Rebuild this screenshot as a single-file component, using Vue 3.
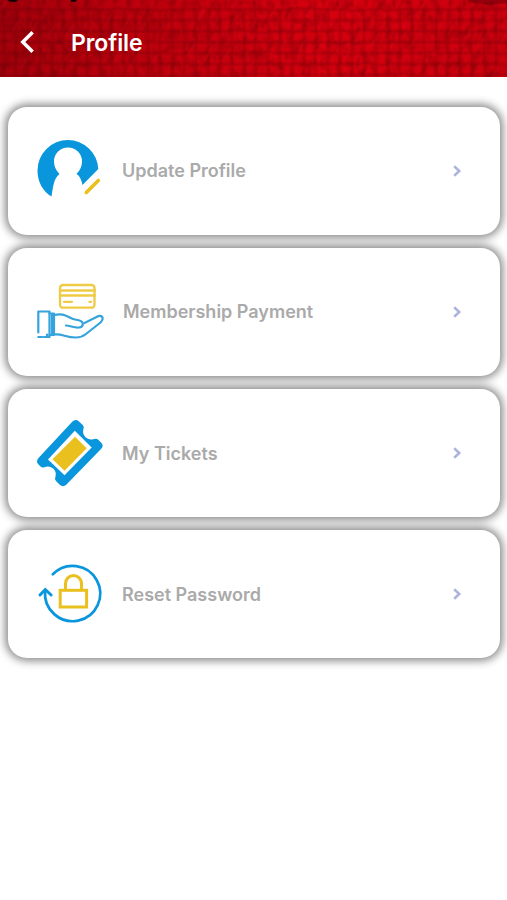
<template>
  <div class="profile-page">
    <header class="app-header">
      <svg class="fabric" viewBox="0 0 507 77" preserveAspectRatio="none" aria-hidden="true">
        <defs>
          <linearGradient id="red" x1="0" x2="1" y1="0" y2="0">
            <stop offset="0" stop-color="#a4000b" />
            <stop offset="0.25" stop-color="#bd000d" />
            <stop offset="0.65" stop-color="#d8000f" />
            <stop offset="1" stop-color="#cb000e" />
          </linearGradient>
          <filter id="wobble" x="0" y="0" width="1" height="1" color-interpolation-filters="sRGB">
            <feTurbulence type="fractalNoise" baseFrequency="0.05" numOctaves="2" seed="4" />
            <feDisplacementMap in="SourceGraphic" scale="3" xChannelSelector="R" yChannelSelector="G" />
            <feGaussianBlur stdDeviation="0.8" />
          </filter>
          <filter id="grain" x="0" y="0" width="1" height="1" color-interpolation-filters="sRGB">
            <feTurbulence type="fractalNoise" baseFrequency="0.14 0.1" numOctaves="3" seed="9" />
            <feColorMatrix values="0 0 0 0 0.35  0 0 0 0 0  0 0 0 0 0.02  1.8 0 0 0 -0.7" />
          </filter>
        </defs>
        <rect width="507" height="77" fill="url(#red)" />
        <rect width="507" height="77" filter="url(#grain)" opacity="0.4" />
        <g filter="url(#wobble)" fill="none">
          <rect width="507" height="77" fill="transparent" />
          <path :d="weave" stroke="#600007" stroke-width="1.4" opacity="0.5" />
          <path :d="creases" stroke="#7c0008" stroke-width="1.2" opacity="0.45" />
          <path :d="creases" stroke="#f01a28" stroke-width="1" opacity="0.35" transform="translate(2 1)" />
        </g>
        <path d="M7 0h11q-1 2-5 2t-6-2zM71 0h6l-2 2h-4z" fill="#170003" />
        <path d="M468 0h39v3l-18 2-21-3z" fill="#65000a" opacity="0.5" />
      </svg>
      <button class="back" aria-label="Back">
        <svg width="16" height="24" viewBox="0 0 16 24">
          <path d="M12.6 2.2 2.8 12l9.8 9.8" fill="none" stroke="#fff" stroke-width="3.5" />
        </svg>
      </button>
      <h1 class="title">Profile</h1>
    </header>

    <main class="menu">
      <button v-for="item in items" :key="item.icon" class="menu-card">
        <svg class="menu-icon" width="76" height="80" viewBox="0 0 76 80" aria-hidden="true">
          <g v-if="item.icon === 'user'">
            <path
              d="M19.5 65.5C11 60.5 5.5 51 5.5 39.5A30.5 30.5 0 0 1 36 9A30.5 30.5 0 0 1 66.3 38L50.5 54C49.5 49 48 45 44.5 43Q50 37.5 50 30.5A14 14 0 0 0 22 30.5Q22 37.5 27.5 43C21.5 47.5 21 57 19.5 65.5Z"
              fill="#0996dc"
            />
            <path d="m54.3 61.5 12-12" stroke="#eac01e" stroke-width="3.6" stroke-linecap="round" />
          </g>
          <g v-else-if="item.icon === 'payment'" fill="none" stroke-linecap="round" stroke-linejoin="round">
            <g stroke="#efcb45" stroke-width="2.3">
              <rect x="28" y="13" width="34.5" height="22.7" rx="3" />
              <path d="M28 18.5h35M28 23.5h35" />
              <path d="M32 29.8h8M57.5 29.8h1.5" />
            </g>
            <g transform="translate(0 -1)" stroke="#35a3dc" stroke-width="2.2">
              <path d="M6.3 61.5V40.5H17.5V66H12M6.3 66h4M15 63.5V66" />
              <path d="M17.5 42.5H22V64H17.5M20 42.5V64" />
              <path d="M22 44C31 42 34 45 41 48L47.5 49.5C52 50.5 52 56 47 56.5C42 57 38 54.5 34 54.5" />
              <path d="M22 63.5C31 62.5 33 66.5 44 66.5Q49.5 66.5 54 63L68.5 51.5C73 46.5 69.5 43 64.5 46L52.5 52" />
            </g>
          </g>
          <g v-else-if="item.icon === 'ticket'" transform="translate(0 -2.5)">
            <path
              d="M40.2 11.2Q43.5 8 47 11L51 14.8Q52.5 16.5 51.3 19A8.2 8.2 0 0 0 62 28.5Q64.5 27.5 66.5 29.5L69.5 32.5Q72 35.5 69 38.5L34.5 74Q31 77.5 27.5 74L24 70.5Q22.3 68.5 23.5 66A8 8 0 0 0 13 56.5Q10.5 57.8 8.5 56L6.5 54Q3.5 51 6.5 47.5Z"
              fill="#0996dc"
            />
            <path d="M42.8 20.3 59.7 37 32.5 64.7 16 49Z" fill="#fff" />
            <path d="M43 26.2 54.7 37.7 32.5 60.2 20.5 48.7Z" fill="#eac01e" />
          </g>
          <g v-else fill="none">
            <path
              d="M20.8 20.3A27.6 27.6 0 1 1 13.1 37"
              stroke="#0996dc"
              stroke-width="2.7"
              stroke-linecap="round"
            />
            <path d="M8 41 13.3 35.5l5.8 5.5" stroke="#0996dc" stroke-width="3" stroke-linecap="round" />
            <rect x="28.2" y="36.3" width="26.4" height="16.7" stroke="#eac01e" stroke-width="3" />
            <path d="M33.5 36.3V29.5a8 8 0 0 1 16 0v6.8" stroke="#eac01e" stroke-width="3" />
          </g>
        </svg>
        <span class="menu-label" :class="item.icon">{{ item.label }}</span>
        <svg class="chevron" width="10" height="14" viewBox="0 0 10 14">
          <path d="m2.2 2.3 5 4.7-5 4.7" fill="none" stroke="#adb5dd" stroke-width="2.6" />
        </svg>
      </button>
    </main>
  </div>
</template>

<script setup>
const items = [
  { icon: 'user', label: 'Update Profile' },
  { icon: 'payment', label: 'Membership Payment' },
  { icon: 'ticket', label: 'My Tickets' },
  { icon: 'password', label: 'Reset Password' }
]

// woven grid behind the header
let weave = ''
for (let x = 4; x < 507; x += 12) weave += `M${x} 9V77`
for (let x = 2; x < 507; x += 14) weave += `M${x} 0v6`
for (let y = 9.5; y < 77; y += 10.9) weave += `M0 ${y}H507`

// short diagonal folds in the cloth
let creases = ''
for (let i = 0; i < 50; i++) {
  const x = (i * 83) % 507
  const y = (i * 29) % 70
  creases += `M${x} ${y + 9}l7-12`
}
</script>

<style>
body {
  background: #fff;
}
</style>

<style scoped>
.profile-page {
  min-height: 900px;
  background: #fff;
  font-family: Inter, "Liberation Sans", sans-serif;
  overflow: hidden;
}

.app-header {
  position: relative;
  height: 77px;
  display: flex;
  align-items: center;
  box-sizing: border-box;
  padding: 8px 0 0 20px;
}

.fabric {
  position: absolute;
  inset: 0;
  width: 100%;
  height: 100%;
}

.back,
.menu-card {
  border: 0;
  padding: 0;
  font: inherit;
  cursor: pointer;
}

.back {
  position: relative;
  top: -1px;
  display: flex;
  width: 51px;
  background: none;
}

.title {
  position: relative;
  margin: 0;
  color: #fff;
  font-size: 23px;
  font-weight: 600;
  line-height: 30px;
  letter-spacing: -0.1px;
}

.menu {
  display: flex;
  flex-direction: column;
  gap: 13.3px;
  padding: 29.5px 7px 0 8px;
}

.menu-card {
  display: flex;
  align-items: center;
  height: 128px;
  padding: 0 38px 0 24px;
  border-radius: 19px;
  background: #fff;
  box-shadow: 0 0 8px 3px rgba(0, 0, 0, 0.46);
}

.menu-icon {
  flex: none;
}

.menu-label {
  flex: 1;
  margin-left: 14px;
  color: #aaa;
  font-size: 18px;
  font-weight: 600;
  text-align: left;
}

.menu-label.payment {
  margin-left: 15px;
}

.chevron {
  flex: none;
}
</style>
